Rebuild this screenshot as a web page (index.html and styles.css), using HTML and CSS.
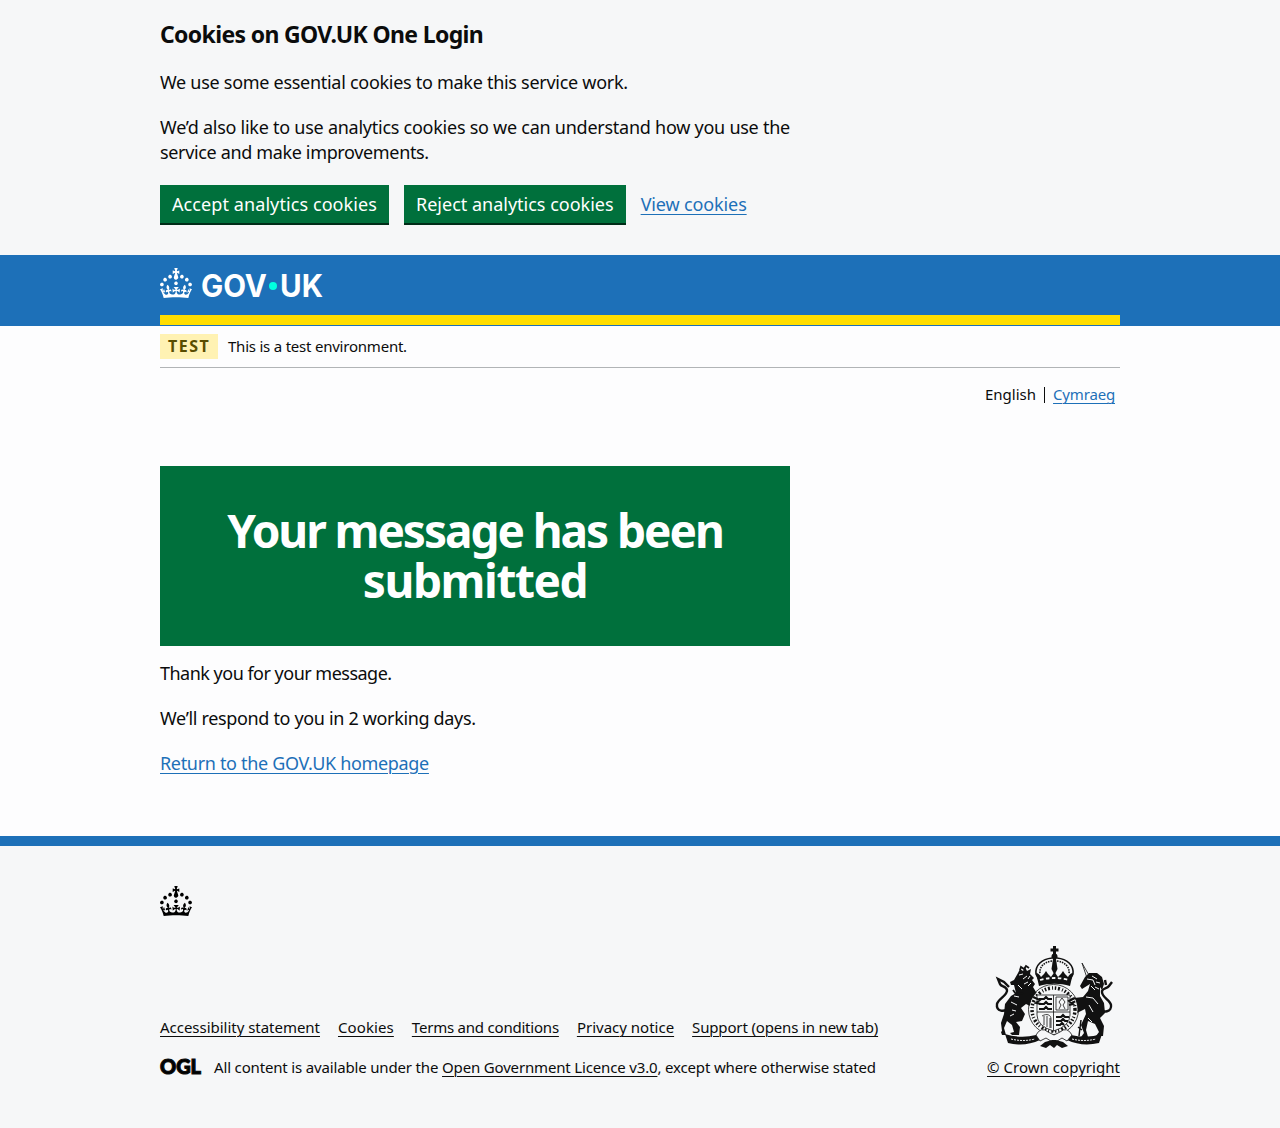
FILE: index.html
```html
<!DOCTYPE html>
<html lang="en">
<head>
<meta charset="utf-8">
<title>Your message has been submitted - GOV.UK One Login</title>
<link rel="stylesheet" href="styles.css">
</head>
<body>
<svg width="0" height="0" class="sprite" aria-hidden="true">
  <symbol id="crown" viewBox="0 0 32 30">
    <path d="M22.6 10.4c-1 .4-2-.1-2.4-1-.4-.9.1-2 1-2.4.9-.4 2 .1 2.4 1s-.1 2-1 2.4m-5.9 6.7c-.9.4-2-.1-2.4-1-.4-.9.1-2 1-2.4.9-.4 2 .1 2.4 1s-.1 2-1 2.4m10.8-3.7c-1 .4-2-.1-2.4-1-.4-.9.1-2 1-2.4.9-.4 2 .1 2.4 1s0 2-1 2.4m3.3 4.8c-1 .4-2-.1-2.4-1-.4-.9.1-2 1-2.4.9-.4 2 .1 2.4 1s-.1 2-1 2.4M17 4.7l2.3 1.2V2.5l-2.3.7-.2-.2.9-3h-3.4l.9 3-.2.2c-.1.1-2.3-.7-2.3-.7v3.4L15 4.7c.1.1.1.2.2.2l-1.3 4c-.1.2-.1.4-.1.6 0 1.1.8 2 1.9 2.2h.7c1-.2 1.9-1.1 1.9-2.1 0-.2 0-.4-.1-.6l-1.3-4c-.1-.2 0-.2.1-.3m-7.6 5.7c.9.4 2-.1 2.4-1 .4-.9-.1-2-1-2.4-.9-.4-2 .1-2.4 1s0 2 1 2.4m-5 3c.9.4 2-.1 2.4-1 .4-.9-.1-2-1-2.4-.9-.4-2 .1-2.4 1s.1 2 1 2.4m-3.2 4.8c.9.4 2-.1 2.4-1 .4-.9-.1-2-1-2.4-.9-.4-2 .1-2.4 1s0 2 1 2.4m14.8 11c4.4 0 8.6.3 12.3.8 1.1-4.5 2.4-7 3.7-8.8l-2.5-.9c.2 1.3.3 1.9 0 2.7-.4-.4-.8-1.1-1.1-2.3l-1.2 4c.7-.5 1.3-.8 2-.9-1.1 2.5-2.6 3.1-3.5 3-1.1-.2-1.7-1.2-1.5-2.1.3-1.2 1.5-1.5 2.1-.1 1.1-2.3-.8-3-2-2.3 1.9-1.9 2.1-3.5.6-5.6-2.1 1.6-2.1 3.2-1.2 5.5-1.2-1.4-3.2-.6-2.5 1.6.9-1.4 2.1-.5 1.9.8-.2 1.1-1.7 2.1-3.5 1.9-2.7-.2-2.9-2.1-2.9-3.6.7-.1 1.9.5 2.9 1.9l.4-4.3c-1.1 1.1-2.1 1.4-3.2 1.4.4-1.2 2.1-3 2.1-3h-5.4s1.7 1.9 2.1 3c-1.1 0-2.1-.2-3.2-1.4l.4 4.3c1-1.4 2.2-2 2.9-1.9-.1 1.5-.2 3.4-2.9 3.6-1.9.2-3.4-.8-3.5-1.9-.2-1.3 1-2.2 1.9-.8.7-2.3-1.2-3-2.5-1.6.9-2.2.9-3.9-1.2-5.5-1.5 2-1.3 3.7.6 5.6-1.2-.7-3.1 0-2 2.3.6-1.4 1.8-1.1 2.1.1.2.9-.3 1.9-1.5 2.1-.9.2-2.4-.5-3.5-3 .6 0 1.2.3 2 .9l-1.2-4c-.3 1.1-.7 1.9-1.1 2.3-.3-.8-.2-1.4 0-2.7l-2.9.9C1.3 23 2.6 25.5 3.7 30c3.7-.5 7.9-.8 12.3-.8"/>
  </symbol>
</svg>
<section class="cookie-banner" aria-label="Cookies on GOV.UK One Login">
  <div class="container">
    <h2 class="cookie-title">Cookies on GOV.UK One Login</h2>
    <p class="body t-essential">We use some essential cookies to make this service work.</p>
    <p class="body"><span class="t-analytics">We’d also like to use analytics cookies so we can understand how you use the</span><br><span class="t-improve">service and make improvements.</span></p>
    <div class="button-group">
      <button class="button t-accept">Accept analytics cookies</button>
      <button class="button">Reject analytics cookies</button>
      <a class="link t-view" href="#">View cookies</a>
    </div>
  </div>
</section>
<header class="header">
  <div class="container header-inner">
    <svg class="logo" width="164" height="30" viewBox="0 0 164 30" role="img" aria-label="GOV.UK">
      <use href="#crown" width="32" height="30"/>
      <text x="41" y="28.9" textLength="66" lengthAdjust="spacingAndGlyphs">GOV</text>
      <circle cx="113" cy="18" r="4"/>
      <text x="120" y="28.9" textLength="43" lengthAdjust="spacingAndGlyphs">UK</text>
    </svg>
  </div>
</header>
<div class="container">
  <div class="phase-banner"><strong class="tag">TEST</strong><span class="t-env">This is a test environment.</span></div>
  <nav class="language"><span>English</span><i class="divider"></i><a class="link t-welsh" href="#">Cymraeg</a></nav>
  <main>
    <div class="panel"><h1>Your message has been<br><span class="t-submitted">submitted</span></h1></div>
    <p class="body t-thanks">Thank you for your message.</p>
    <p class="body t-respond">We’ll respond to you in 2 working days.</p>
    <p class="body"><a class="link t-return" href="#">Return to the GOV.UK homepage</a></p>
  </main>
</div>
<footer class="footer">
  <div class="container">
    <svg class="footer-crown" width="32" height="30"><use href="#crown"/></svg>
    <div class="footer-meta">
      <div class="footer-text">
        <ul class="footer-links">
          <li><a class="t-access" href="#">Accessibility statement</a></li>
          <li><a class="t-cookies" href="#">Cookies</a></li>
          <li><a class="t-terms" href="#">Terms and conditions</a></li>
          <li><a href="#">Privacy notice</a></li>
          <li><a class="t-support" href="#">Support (opens in new tab)</a></li>
        </ul>
        <div class="licence">
          <svg class="ogl" width="42" height="20" viewBox="0 0 42 20"><text x="0" y="17" textLength="41" lengthAdjust="spacingAndGlyphs">OGL</text></svg>
          <span class="t-licence">All content is available under the <a href="#">Open Government Licence v3.0</a>, except where otherwise stated</span>
        </div>
      </div>
      <div class="copyright">
        <svg class="arms" width="125" height="102" viewBox="0 0 125 102" aria-hidden="true">
          <!-- royal crown -->
          <path d="M62 0h3v2.500h2.500v3H65V8h-3V5.500h-2.500v-3H62z"/>
          <circle cx="63.500" cy="10.500" r="3"/>
          <path d="M62 13h3l1.500 10-3 6-3-6z"/>
          <g class="line">
            <path d="M61 12C51 13 44 19 45 28l3 6M66 12c10 1 17 7 16 16l-3 6" stroke-width="1.600"/>
            <path d="M61 15c-8 1-13 6-12 13M66 15c8 1 13 6 12 13" stroke-width="1.600" stroke-dasharray="1.500 1"/>
          </g>
          <path d="M45 27c2 0 4 2 5 4l3-3 2-3 2 3 3 3 3.500-5 3.500 5 3-3 2-3 2 3 3 3c1-2 3-4 5-4l-3 13c-10-3-21-3-31 0z"/>
          <path d="M49 34q14.500-4 29 0" fill="none" stroke="#f6f7f8" stroke-width="1.800" stroke-dasharray="3.500 2.500"/>
          <!-- lion and unicorn tails -->
          <path d="M20 60c-7 8-15 5-14-2 1-5 11-9 10-14-1-4-6-3-7-6l-2-5 6 3 5 5" class="line" stroke-width="2.400"/>
          <path d="M106 61c7 8 15 4 14-2-1-5-10-8-9-14 1-3 5-2 7-5l3-4m-6 3l-1-5" class="line" stroke-width="2.400"/>
          <!-- lion -->
          <path d="M27 27l2-4 3 2 2-4 2 4 4-2-1 5 4 4-2 2 3 4-2 3 3 5 6 3 4 0-1 4-6 1-3 5-2 3-8-4-5 4 4 6-3 7-6 1 4 5-1 8h-7l-2-2 4-1-2-7-5-4-3 7 2 7h-4l-1-3 1-1-1-8 3-9 1-10 6-8 5-3-2-8-3 0-1-3 4-2z"/>
          <path d="M28 29l4-1m0 5l4-3m-3 8l4-2m2-6l-2 3m3 4l-3 3m-10-1l4 4m-8 7l5 1m-8 5l6 3m-5 5l4 1m-6 5l4-2" class="light"/>
          <path d="M32 47l-7 1-3-4M29 24l1-3 3 2 2-3 3 2" class="line" stroke-width="1.800"/>
          <!-- unicorn -->
          <path d="M91 17l8 14-3 1z" class="thin"/>
          <path d="M94 31l4-4 8 0 5 4 2 7-2 6-2-3 0 9 4 7 1 10-5 5 4 8-1 10h-7l3-4-4-8-7-3-2 9 2 7h-7l3-4-3-8 5-11-1-5-8 4-4-3 4-4-9-3-1-4 7-1 9-1 5-6 2-7-8 5-2-3z"/>
          <path d="M96 33l6 1 2 5m-4 1l4 4m-9 7l7 1 5 6m-9 1l4 7m-5 6l4 4M101 30l5 3m-1 3l4 1m-5 4l4 2" class="light"/>
          <path d="M90 74l-2 16m-1-9l4 3" class="line" stroke-width="1.500"/>
          <!-- garter and shield -->
          <circle cx="62.500" cy="63.500" r="24" class="paper"/>
          <circle cx="62.500" cy="63.500" r="21.500" fill="none" stroke="#111" stroke-width="3.500" stroke-dasharray="1.500 1.700 2 2.200 1 1.800"/>
          <circle cx="62.500" cy="63.500" r="25" class="thin"/>
          <path d="M46 49h33v20q0 11-16.500 16Q46 80 46 69z" class="paper"/>
          <path d="M46 49h33v20q0 11-16.500 16Q46 80 46 69z" class="thin"/>
          <path d="M62.500 49v36M46 66h33" class="thin"/>
          <path d="M48 53h5l2-2 2 2h4M48 58h5l2-2 2 2h4M48 63h5l2-2 2 2h4M65 71h5l2-2 2 2h4M65 75h5l2-2 2 2h3M65 79h4l2-2 2 2" class="line" stroke-width="2.200"/>
          <path d="M65 51h12v13H65zM71 52l3 4-2 3 2 4M71 52l-3 4 2 3-2 4" class="thin"/>
          <path d="M51 70c5-3 9-1 9 3v9M53 70v9m3-9v11m3-9v10" class="thin"/>
          <path d="M42 51l7 3-4 3 5 1M84 52l-6 3 4 3-4 1" class="line" stroke-width="2"/>
          <!-- compartment -->
          <path d="M14 88q16 5 31 1l4 5q-15 7-32 3zM111 88q-16 5-31 1l-4 5q15 7 32 3z"/>
          <path d="M20 93q12 3 24 0M81 93q12 3 24 0" class="light" stroke-dasharray="2 1"/>
          <path d="M45 89q5-9 12-3l6 3 6-3q7-6 12 3l-5 6-5-3-8 5-8-5-6 3z" class="paper"/>
          <path d="M45 89q5-9 12-3l6 3 6-3q7-6 12 3l-5 6-5-3-8 5-8-5-6 3z" class="thin"/>
          <path d="M49 100l5-4 7-2h4l7 2 5 4-6 2-5-3-3 3-4-3-4 3z"/>
        </svg>
        <a class="t-crown" href="#">© Crown copyright</a>
      </div>
    </div>
  </div>
</footer>
</body>
</html>
```
FILE: styles.css
```css
body {
  margin: 0;
  background: #fdfdfe;
  color: #0b0c0c;
  font-family: "Noto Sans", sans-serif;
  font-size: 18px;
  line-height: 25px;
}
a {
  color: inherit;
  text-decoration-thickness: 1px;
  text-underline-offset: 3px;
}
.link { color: #1d70b8; }
.sprite { display: block; }
.container { width: 960px; margin: 0 auto; }
.body { margin: 0 0 20px; white-space: nowrap; }

/* Cookie banner */
.cookie-banner { height: 236px; padding-top: 19px; background: #f6f7f8; }
.cookie-title {
  margin: 0 0 21px;
  font-size: 23px;
  line-height: 30px;
  font-weight: 700;
  letter-spacing: -0.655px;
}
.button-group { display: flex; gap: 15px; align-items: flex-start; height: 40px; }
.button {
  height: 38px;
  margin: 0;
  padding: 0 12px;
  border: 0;
  background: #00703c;
  color: #fff;
  box-shadow: 0 2px 0 #002d18;
  font: inherit;
}
.button-group .link { padding-top: 7px; }

/* Header */
.header { height: 71px; background: #1d70b8; }
.header-inner { height: 60px; border-bottom: 10px solid #ffdd00; }
.logo {
  display: block;
  padding-top: 13px;
  fill: #fff;
  font: 700 31px Inter, sans-serif;
  overflow: visible;
}
.logo circle { fill: #00ffe0; }

.phase-banner {
  display: flex;
  gap: 10px;
  align-items: flex-start;
  height: 33px;
  padding-top: 8px;
  border-bottom: 1px solid #b1b4b6;
  font-size: 15px;
  line-height: 24px;
}
.tag {
  width: 50px;
  padding-left: 8px;
  background: #fff2b3;
  color: #594d00;
  font-size: 16px;
  line-height: 25px;
  letter-spacing: 1.5px;
}
.language {
  display: flex;
  justify-content: flex-end;
  height: 82px;
  padding: 16px 5px 0 0;
  font-size: 15px;
  line-height: 20px;
}
.divider { width: 1px; height: 16px; margin: 3px 8px 0; background: #0b0c0c; }

/* Confirmation panel */
.panel {
  height: 101px;
  width: 550px;
  margin-bottom: 15px;
  padding: 39px 40px 40px;
  background: #00703c;
  color: #fff;
  text-align: center;
}
h1 { margin: 0; font-size: 46px; line-height: 50px; letter-spacing: -2.05px; }

/* Footer */
.footer {
  height: 242px;
  margin-top: 60px;
  padding-top: 40px;
  border-top: 10px solid #1d70b8;
  background: #f6f7f8;
  font-size: 15px;
  line-height: 20px;
}
.footer-crown { display: block; margin-bottom: 30px; }
.footer-meta { display: flex; justify-content: space-between; align-items: flex-end; }
.footer-text { padding-bottom: 1px; }
.footer-links { display: flex; gap: 18px; margin: 0 0 20px; padding: 0; list-style: none; }
.licence { display: flex; gap: 12px; white-space: nowrap; }
.ogl { display: block; font: 900 21px Lato, sans-serif; stroke: #0b0c0c; stroke-width: 1.2px; overflow: visible; }
.copyright { display: flex; flex-direction: column; align-items: center; gap: 9px; padding-bottom: 1px; }
.arms { fill: #111; }
.arms .line { fill: none; stroke: #111; }
.arms .thin { stroke: #111; stroke-width: 0.8px; fill: none; }
.arms .paper { fill: #f6f7f8; }
.arms .light { fill: none; stroke: #f6f7f8; stroke-width: 1px; }

/* Per-text tracking */
.t-essential { letter-spacing: -0.285px; }
.t-analytics { letter-spacing: -0.254px; }
.t-improve { letter-spacing: -0.35px; }
.t-accept { letter-spacing: 0.088px; }
.t-view { letter-spacing: -0.125px; }
.t-env { letter-spacing: -0.22px; }
.t-welsh { letter-spacing: -0.17px; }
.t-submitted { letter-spacing: -1.4px; }
.t-thanks { letter-spacing: -0.51px; }
.t-respond { letter-spacing: -0.34px; }
.t-return { letter-spacing: -0.328px; }
.t-access { letter-spacing: -0.025px; }
.t-cookies { letter-spacing: 0.1px; }
.t-terms { letter-spacing: -0.215px; }
.t-support { letter-spacing: -0.15px; }
.t-licence { letter-spacing: -0.16px; }
.t-crown { letter-spacing: 0.04px; }
```
